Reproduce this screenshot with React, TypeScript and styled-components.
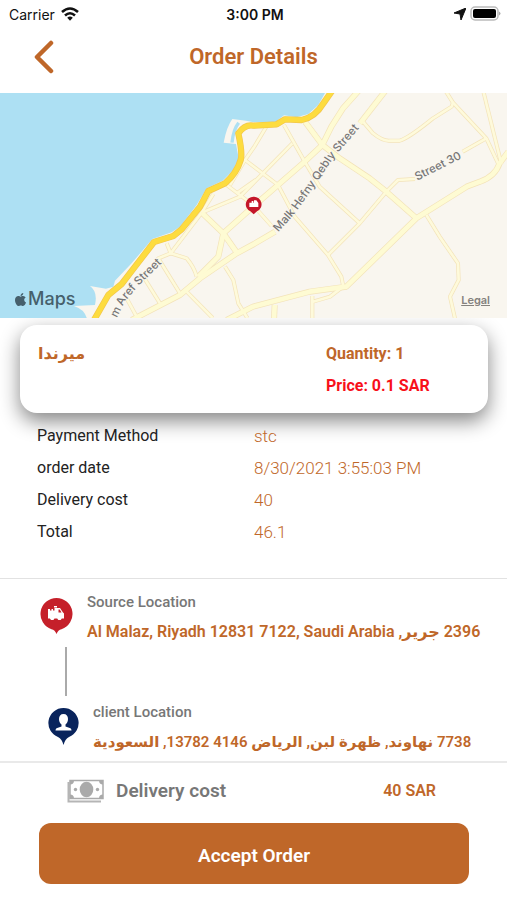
import React from "react";
import styled, { createGlobalStyle } from "styled-components";
import { FaApple } from "react-icons/fa";

const ORANGE = "#bf6729";

const GlobalStyle = createGlobalStyle`
  * { box-sizing: border-box; }
  body {
    margin: 0;
    background: #fff;
    font-family: Roboto, "DejaVu Sans", sans-serif;
    color: #222;
  }
  h1, dl, dd, p { margin: 0; }
`;

const Screen = styled.main`
  display: flex;
  flex-direction: column;
  min-height: 100vh;
  overflow: hidden;
`;

const StatusBar = styled.div`
  display: grid;
  grid-template-columns: 1fr auto 1fr;
  align-items: center;
  height: 28px;
  padding: 0 6px 0 9px;
  font: 400 14px "Inter", sans-serif;
  color: #111;
`;

const StatusGroup = styled.div<{ $end?: boolean }>`
  display: flex;
  align-items: center;
  gap: ${(p) => (p.$end ? 4 : 6)}px;
  justify-content: ${(p) => (p.$end ? "flex-end" : "flex-start")};
`;

const Clock = styled.time`
  font-weight: 600;
`;

const Header = styled.header`
  display: grid;
  grid-template-columns: 40px 1fr 40px;
  align-items: center;
  height: 65px;
  padding: 0 24px 8px;
`;

const BackButton = styled.button`
  display: flex;
  justify-content: center;
  padding: 0;
  border: 0;
  background: none;
  cursor: pointer;
`;

const Title = styled.h1`
  font-size: 22px;
  line-height: 32px;
  font-weight: 600;
  text-align: center;
  color: ${ORANGE};
`;

const MapArea = styled.section`
  position: relative;
  height: 225px;
  background: #f9f6ef;
`;

const MapDrawing = styled.svg`
  display: block;
  width: 100%;
  height: 100%;
`;

const MapBrand = styled.div`
  position: absolute;
  left: 13px;
  bottom: 8px;
  display: flex;
  align-items: center;
  font: 500 18px/22px "Inter", sans-serif;
  color: #46606c;
`;

const LegalLink = styled.a`
  position: absolute;
  right: 17px;
  bottom: 10px;
  font: 600 11px/16px "Inter", sans-serif;
  color: #85827e;
`;

const ItemCard = styled.section`
  display: grid;
  grid-template-columns: 288px 1fr;
  margin: 7px 19px 0 20px;
  padding: 13px 18px 11px;
  height: 88px;
  border-radius: 17px;
  background: #fff;
  box-shadow: 0 8px 20px rgba(0, 0, 0, 0.48);
  font-size: 16px;
  line-height: 32px;
  font-weight: 700;
  color: ${ORANGE};
`;

const Price = styled.p`
  color: #f8101a;
`;

const Details = styled.dl`
  position: relative;
  display: grid;
  grid-template-columns: 217px 1fr;
  padding: 7px 37px 30px;
  font-size: 17px;
  line-height: 32px;
  border-bottom: 1px solid #e2e2e2;
`;

const DetailLabel = styled.dt`
  font-size: 16px;
`;

const DetailValue = styled.dd`
  color: ${ORANGE};
  font-weight: 300;
`;

const Route = styled.section`
  display: flex;
  flex-direction: column;
  height: 184px;
  padding: 7px 12px 0 40px;
  border-bottom: 2px solid #e9e9e9;
`;

const Stop = styled.div<{ $inset?: boolean }>`
  display: flex;
  align-items: center;
  gap: 14px;
  padding-left: ${(p) => (p.$inset ? 8 : 0)}px;
`;

const StopLabel = styled.p`
  font-size: 15px;
  line-height: 32px;
  font-weight: 500;
  color: #777;
`;

const Address = styled.p`
  font-size: 16px;
  line-height: 28px;
  height: 28px;
  font-weight: 600;
  text-align: left;
  white-space: nowrap;
  color: ${ORANGE};

  &:lang(ar) {
    font-size: 15px;
  }
`;

const Connector = styled.div`
  width: 2px;
  height: 49px;
  margin: 1px 0 0 25px;
  background: #aaa;
`;

const Summary = styled.section`
  display: flex;
  align-items: center;
  gap: 12px;
  height: 55px;
  padding: 0 71px 0 67px;
`;

const SummaryLabel = styled.span`
  flex: 1;
  font-size: 19px;
  font-weight: 600;
  color: #777;
`;

const SummaryValue = styled.span`
  font-size: 16px;
  font-weight: 600;
  color: ${ORANGE};
`;

const AcceptButton = styled.button`
  height: 61px;
  margin: 5px 38px 16px 39px;
  padding-top: 4px;
  border: 0;
  border-radius: 12px;
  background: ${ORANGE};
  color: #fff;
  font: 600 19px Roboto, sans-serif;
  cursor: pointer;
`;

const minorRoads = [
  "M605 368 512 490 475 505 540 610",
  "M605 368 640 312",
  "M605 368 720 320 877 160",
  "M500 460 512 490 560 505Q582 530 590 560",
  "M430 560 480 640",
  "M380 625 412 684",
  "M560 605 638 684",
  "M675 530 700 570 715 640 742 684",
  "M680 285 759 345 815 408",
  "M710 310 767 270",
  "M799 110 763 170 735 210 690 285",
  "M735 210 834 285 884 380 984 495 1024 560 1030 590",
  "M852 105 914 215 959 290 1079 400",
  "M984 495 1079 400 1159 305 1194 270 1245 267M1388 185 1459 145",
  "M1089 95 1119 130Q1148 154 1170 152L1199 152Q1225 145 1299 85L1355 50 1359 38",
  "M1335 0 1359 38 1459 145 1495 222",
  "M1449 0 1504 222",
  "M1279 375 1319 440 1374 520 1376 570 1350 620 1366 690",
  "M1029 590 990 620 939 635M937 618 937 690",
];

const majorRoads = [
  "M605 368 670 430 712 490",
  "M670 430 655 500 595 560",
  "M395 690 540 615 600 565 710 490 762 462 825 425",
  "M1080 100 1158 0",
  "M670 430 759 350 834 285 914 215 967 165 994 110 1029 55 1078 0",
  "M915 95 967 165 1019 205 1109 265 1159 305 1249 385",
  "M1525 185 1499 220Q1485 260 1440 275L1400 290 1249 385 1039 590 929 605 759 650 680 690",
  "M824 645 822 690",
];

const Wifi = () => (
  <svg width="18" height="14" viewBox="0 0 18 14" fill="none" stroke="#111" strokeWidth="2.6" aria-hidden="true">
    <path d="M1 5Q9-2 17 5" />
    <path d="M4 8.5Q9 4 14 8.5" />
    <path d="M6.2 10.8Q9 8.4 11.8 10.8L9 13.8Z" fill="#111" stroke="none" />
  </svg>
);

const TruckPin = () => (
  <svg width="33" height="38" viewBox="0 0 33 38" aria-hidden="true">
    <path d="M16.500 1a16 16 0 0 1 5 31.200Q18 33 16.500 37 15 33 11.500 32.200A16 16 0 0 1 16.500 1z" fill="#c5202a" />
    <path d="M8 12h2v1.500h1.500V12h1.500v1.500h1.500V11h5.500l3 4.500 1 1v5h-2.200a2.500 2.500 0 0 1-4.600 0h-2.700a2.500 2.500 0 0 1-4.600 0H8z" fill="#fff" />
    <path d="M18.500 12.500h1.200l1.800 3h-3z" fill="#c5202a" />
    <circle cx="12.200" cy="21.500" r="1.500" fill="#fff" />
    <circle cx="19.500" cy="21.500" r="1.500" fill="#fff" />
    <path d="M14 9h3v1.500h-3z" fill="#fff" />
  </svg>
);

const PersonPin = () => (
  <svg width="31" height="38" viewBox="0 0 31 38" aria-hidden="true">
    <path d="M15.500 1A15 15 0 0 1 21 30Q17 32 15.500 38 14 32 10 30A15 15 0 0 1 15.500 1z" fill="#09245c" />
    <path d="M15.500 7c3 0 4.500 2 4.500 5 0 2.500-1 4.500-2.500 5.500v2l5 1.800q1 .7 1 2.200H7.500q0-1.500 1-2.200l5-1.800v-2C12 16.500 11 14.500 11 12c0-3 1.500-5 4.500-5z" fill="#fff" />
  </svg>
);

const Banknote = () => (
  <svg width="37" height="24" viewBox="0 0 37 24" fill="none" aria-hidden="true">
    <path d="M1.500 3v19.500H34" stroke="#b5b5b5" strokeWidth="2" />
    <rect x="3" y="1.500" width="33" height="18" stroke="#aaa" strokeWidth="1.500" />
    <path d="M3 1.500h4q0 4-4 4zM36 1.500h-4q0 4 4 4zM3 19.500h4q0-4-4-4zM36 19.500h-4q0-4 4-4z" fill="#aaa" />
    <ellipse cx="19.500" cy="10.500" rx="6.800" ry="7.800" fill="#aaa" />
    <circle cx="8.500" cy="10.500" r="1.700" fill="#aaa" />
    <circle cx="30.500" cy="10.500" r="1.700" fill="#aaa" />
  </svg>
);

const StreetMap = () => (
  <MapDrawing viewBox="0 9 1521 675" preserveAspectRatio="xMidYMid slice" role="img" aria-label="Street map">
    <path d="M0 0H980L955 45 925 72 890 82 852 76 825 97 757 96 738 92 697 87Q680 110 671 158L708 162 716 205 700 240 668 272 620 295 590 345 540 410 515 427 457 447 395 520 345 572 340 590 318 596 270 588Q294 605 285 645L222 648Q255 658 262 690H0z" fill="#ade0f3" />
    <path d="M716 98Q700 118 696 158" stroke="#ade0f3" strokeWidth="10" fill="none" />
    <g fill="none" strokeLinejoin="round">
      {minorRoads.map((d) => <path key={d} d={d} stroke="#f3e3b9" strokeWidth="12" />)}
      {majorRoads.map((d) => <path key={d} d={d} stroke="#f3e3b9" strokeWidth="18" />)}
      {minorRoads.map((d) => <path key={d + "fill"} d={d} stroke="#fefadb" strokeWidth="8" />)}
      {majorRoads.map((d) => <path key={d + "fill"} d={d} stroke="#fefbd3" strokeWidth="14" />)}
      <path d="M998 0 970 40Q945 82 905 90L855 88 830 103 760 107Q735 102 715 130 728 190 722 210 710 250 675 280L625 303 600 350 545 418 520 438 462 456 405 530 365 582 325 615 282 690" stroke="#f2c64c" strokeWidth="19" />
      <path d="M998 0 970 40Q945 82 905 90L855 88 830 103 760 107Q735 102 715 130 728 190 722 210 710 250 675 280L625 303 600 350 545 418 520 438 462 456 405 530 365 582 325 615 282 690" stroke="#fddc3f" strokeWidth="15" />
      <path id="malk" d="M835 427 885 370 935 300 1000 205 1090 100" />
      <path id="aref" d="M350 684 375 635 415 588 490 515" />
      <path id="thirty" d="M1252 272 1410 192" />
    </g>
    <g fontFamily="Inter, sans-serif" fontSize="34" fontWeight="500" fill="#777" stroke="#f9f6ef" strokeWidth="5" paintOrder="stroke">
      <text><textPath href="#malk">Malk Hefny Qebly Street</textPath></text>
      <text><textPath href="#aref">m Aref Street</textPath></text>
      <text><textPath href="#thirty">Street 30</textPath></text>
    </g>
    <path d="M761 320a23 23 0 0 1 10 44l-10 9-10-9a23 23 0 0 1 10-44z" fill="#c4162a" />
    <path d="M748 338h7v-5h5v5h2v-7h7l6 8v12h-27z" fill="#fff" />
  </MapDrawing>
);

export default function App() {
  return (
    <>
      <GlobalStyle />
      <Screen>
        <StatusBar>
          <StatusGroup>Carrier <Wifi /></StatusGroup>
          <Clock>3:00 PM</Clock>
          <StatusGroup $end>
            <svg width="12" height="12" viewBox="0 0 12 12" aria-hidden="true"><path d="M12 0 7 12 6 6 0 5z" fill="#111" stroke="#111" strokeLinejoin="round" /></svg>
            <svg width="31" height="16" viewBox="0 0 31 16" aria-hidden="true">
              <rect x="1" y="1" width="27" height="13" rx="4" fill="#fff" stroke="#bbb" strokeWidth="1.500" />
              <rect x="3" y="3" width="23" height="9" rx="2" fill="#000" />
              <path d="M29 5.500Q32 7.500 29 9.500z" fill="#aaa" />
            </svg>
          </StatusGroup>
        </StatusBar>
        <Header>
          <BackButton aria-label="Back">
            <svg width="20" height="34" viewBox="0 0 20 34" fill="none" stroke={ORANGE} strokeWidth="4.500" strokeLinecap="round" strokeLinejoin="round"><path d="M17 3 3 17 17 31" /></svg>
          </BackButton>
          <Title>Order Details</Title>
        </Header>
        <MapArea>
          <StreetMap />
          <MapBrand><FaApple size={15} />Maps</MapBrand>
          <LegalLink href="#legal">Legal</LegalLink>
        </MapArea>
        <ItemCard>
          <p lang="ar">ميرندا</p>
          <div>
            <p>Quantity: 1</p>
            <Price>Price: 0.1 SAR</Price>
          </div>
        </ItemCard>
        <Details>
          <DetailLabel>Payment Method</DetailLabel><DetailValue>stc</DetailValue>
          <DetailLabel>order date</DetailLabel><DetailValue>8/30/2021 3:55:03 PM</DetailValue>
          <DetailLabel>Delivery cost</DetailLabel><DetailValue>40</DetailValue>
          <DetailLabel>Total</DetailLabel><DetailValue>46.1</DetailValue>
        </Details>
        <Route>
          <Stop>
            <TruckPin />
            <div>
              <StopLabel>Source Location</StopLabel>
              <Address dir="rtl">2396 جرير, Al Malaz, Riyadh 12831 7122, Saudi Arabia</Address>
            </div>
          </Stop>
          <Connector />
          <Stop $inset>
            <PersonPin />
            <div>
              <StopLabel>client Location</StopLabel>
              <Address dir="rtl" lang="ar">7738 نهاوند, ظهرة لبن, الرياض 4146 13782, السعودية</Address>
            </div>
          </Stop>
        </Route>
        <Summary>
          <Banknote />
          <SummaryLabel>Delivery cost</SummaryLabel>
          <SummaryValue>40 SAR</SummaryValue>
        </Summary>
        <AcceptButton>Accept Order</AcceptButton>
      </Screen>
    </>
  );
}
